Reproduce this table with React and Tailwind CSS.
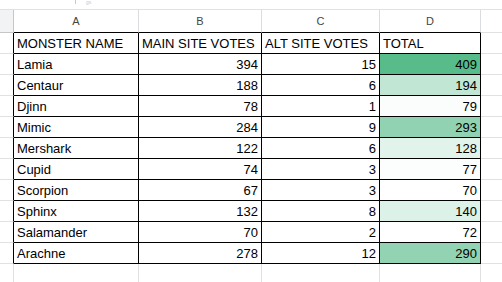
import React from "react";

const rows = [
  ["Lamia", 394, 15, 409, "bg-[#57bb8a]"],
  ["Centaur", 188, 6, 194, "bg-[#c1e6d4]"],
  ["Djinn", 78, 1, 79, "bg-[#fbfdfc]"],
  ["Mimic", 284, 9, 293, "bg-[#90d2b2]"],
  ["Mershark", 122, 6, 128, "bg-[#e2f3eb]"],
  ["Cupid", 74, 3, 77, "bg-[#fbfefc]"],
  ["Scorpion", 67, 3, 70, "bg-white"],
  ["Sphinx", 132, 8, 140, "bg-[#dcf1e7]"],
  ["Salamander", 70, 2, 72, "bg-[#fefffe]"],
  ["Arachne", 278, 12, 290, "bg-[#92d3b3]"],
];

const cols = "grid grid-cols-[14px_125px_123px_118px_101px_1fr]";
const cell = "px-[3px] pt-[2px] leading-[18px] border-r border-b border-black whitespace-nowrap overflow-hidden";

export default function App() {
  return (
    <div className="w-[502px] h-[282px] overflow-hidden bg-white text-[13px] text-black" style={{ fontFamily: '"Liberation Sans", Arial, sans-serif' }}>
      {/* top strip */}
      <div className="relative h-[10px] border-b border-[#e1e1e1]">
        <div className="absolute left-[75px] top-0 w-px h-[4px] bg-[#c8c8c8]" />
        <div className="absolute left-[86px] top-0 text-[5px] leading-[5px] text-[#c8c8c8]">gs</div>
      </div>
      {/* column header */}
      <div className={`${cols} h-[23px]`}>
        <div className="bg-[#f1f3f4] border-r border-b border-[#c4c7c5]" />
        {["A", "B", "C", "D"].map((l) => (
          <div key={l} className="flex items-center justify-center text-[11px] text-[#444] border-r border-[#dadce0] border-b border-b-black">
            {l}
          </div>
        ))}
        <div className="border-b border-[#e1e1e1]" />
      </div>
      {/* header row */}
      <div className={`${cols} h-[21px]`}>
        <div className="border-r border-r-black border-b border-b-[#e1e1e1]" />
        <div className={cell}>MONSTER NAME</div>
        <div className={cell}>MAIN SITE VOTES</div>
        <div className={cell}>ALT SITE VOTES</div>
        <div className={cell}>TOTAL</div>
        <div className="border-b border-[#e1e1e1]" />
      </div>
      {rows.map(([name, a, b, t, bg]) => (
        <div key={name} className={`${cols} h-[21px]`}>
          <div className="border-r border-r-black border-b border-b-[#e1e1e1]" />
          <div className={cell}>{name}</div>
          <div className={`${cell} text-right`}>{a}</div>
          <div className={`${cell} text-right`}>{b}</div>
          <div className={`${cell} text-right ${bg}`}>{t}</div>
          <div className="border-b border-[#e1e1e1]" />
        </div>
      ))}
      <div className={`${cols} h-[21px]`}>
        <div className="border-r border-[#e1e1e1]" />
        <div className="border-r border-[#e1e1e1]" />
        <div className="border-r border-[#e1e1e1]" />
        <div className="border-r border-[#e1e1e1]" />
        <div className="border-r border-[#e1e1e1]" />
        <div />
      </div>
    </div>
  );
}
